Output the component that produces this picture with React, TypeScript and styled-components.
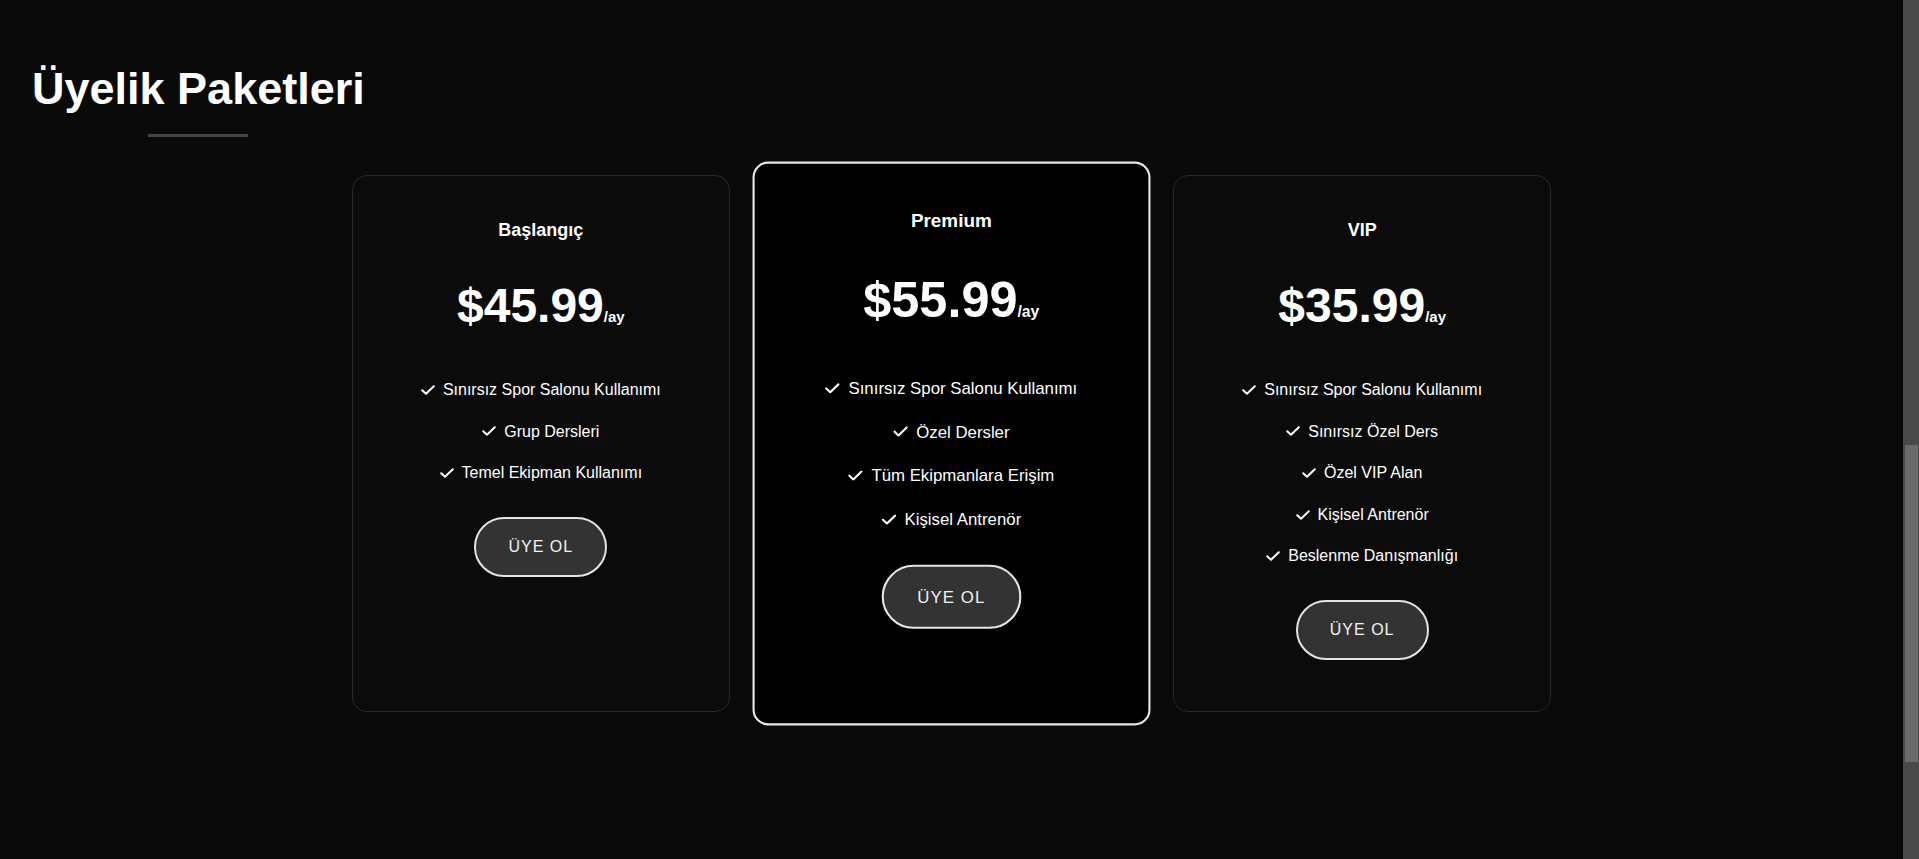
import React from 'react';
import styled, { createGlobalStyle } from 'styled-components';

const GlobalStyle = createGlobalStyle`
  html, body {
    margin: 0;
    padding: 0;
    background: #0a0a0a;
    color: #fff;
    font-family: "Liberation Sans", Arial, sans-serif;
  }
`;

const Viewport = styled.div`
  display: flex;
  height: 100vh;
  overflow: hidden;
`;

const PricingSection = styled.section`
  flex: 1;
  min-width: 0;
  padding: 63px 32px 0;
  background: #0a0a0a;
`;

// the window scrollbar, page is scrolled down to this section
const ScrollRail = styled.div`
  flex: 0 0 16px;
  background: #494949;
`;

const ScrollThumb = styled.div`
  height: 317px;
  margin: 445px 1px 0 2px;
  background: #6a6a6a;
`;

const TitleWrap = styled.div`
  display: flex;
`;

const SectionTitle = styled.h2`
  position: relative;
  margin: 0;
  font-size: 45px;
  font-weight: 700;
  color: #fff;

  &::after {
    content: '';
    position: absolute;
    left: 50%;
    bottom: -22px;
    width: 100px;
    height: 3px;
    background: #444;
    transform: translateX(-50%);
  }
`;

const PlansGrid = styled.div`
  display: grid;
  grid-template-columns: repeat(3, 1fr);
  gap: 32px;
  max-width: 1200px;
  margin: 60px auto 0;
`;

const PlanCard = styled.div<{ $featured?: boolean }>`
  box-sizing: border-box;
  padding: 44px 32px 51px;
  text-align: center;
  border-radius: 15px;
  background: ${p => (p.$featured ? '#000' : '#0b0b0b')};
  border: ${p => (p.$featured ? '2px solid #e8e8e8' : '1px solid #2a2a2a')};
  transform: ${p => (p.$featured ? 'scale(1.05)' : 'none')};
`;

const PlanName = styled.h3`
  margin: 0 0 37px;
  font-size: 18px;
  font-weight: 700;
  color: #fff;
`;

const Price = styled.div`
  margin-bottom: 44px;
  font-size: 48px;
  font-weight: 700;
  color: #fff;
`;

const Period = styled.span`
  font-size: 15px;
`;

const Features = styled.ul`
  display: flex;
  flex-direction: column;
  gap: 16px;
  list-style: none;
  margin: 0 0 31px;
  padding: 0;
`;

const Feature = styled.li`
  display: flex;
  justify-content: center;
  align-items: center;
  gap: 8px;
  font-size: 16px;
  line-height: 1.6;
  color: #fff;
`;

const JoinButton = styled.button`
  padding: 19.2px 32px;
  font-family: inherit;
  font-size: 16px;
  letter-spacing: 1px;
  color: #f2f2f2;
  background: #333;
  border: 2px solid #e5e5e5;
  border-radius: 40px;
  cursor: pointer;
`;

const CheckIcon: React.FC = () => (
  <svg width="14" height="10" viewBox="0 0 14 10" fill="none">
    <polyline
      points="1.2 5.2 5 8.8 12.8 1.2"
      stroke="#fff"
      strokeWidth="2"
      strokeLinecap="round"
      strokeLinejoin="round"
    />
  </svg>
);

type Plan = {
  name: string;
  price: string;
  features: string[];
  featured?: boolean;
};

const plans: Plan[] = [
  {
    name: 'Başlangıç',
    price: '$45.99',
    features: ['Sınırsız Spor Salonu Kullanımı', 'Grup Dersleri', 'Temel Ekipman Kullanımı'],
  },
  {
    name: 'Premium',
    price: '$55.99',
    features: ['Sınırsız Spor Salonu Kullanımı', 'Özel Dersler', 'Tüm Ekipmanlara Erişim', 'Kişisel Antrenör'],
    featured: true,
  },
  {
    name: 'VIP',
    price: '$35.99',
    features: [
      'Sınırsız Spor Salonu Kullanımı',
      'Sınırsız Özel Ders',
      'Özel VIP Alan',
      'Kişisel Antrenör',
      'Beslenme Danışmanlığı',
    ],
  },
];

const App: React.FC = () => {
  return (
    <>
      <GlobalStyle />
      <Viewport>
        <PricingSection>
          <TitleWrap>
            <SectionTitle>Üyelik Paketleri</SectionTitle>
          </TitleWrap>
          <PlansGrid>
            {plans.map(plan => (
              <PlanCard key={plan.name} $featured={plan.featured}>
                <PlanName>{plan.name}</PlanName>
                <Price>
                  {plan.price}
                  <Period>/ay</Period>
                </Price>
                <Features>
                  {plan.features.map(f => (
                    <Feature key={f}>
                      <CheckIcon />
                      {f}
                    </Feature>
                  ))}
                </Features>
                <JoinButton>ÜYE OL</JoinButton>
              </PlanCard>
            ))}
          </PlansGrid>
        </PricingSection>
        <ScrollRail>
          <ScrollThumb />
        </ScrollRail>
      </Viewport>
    </>
  );
};

export default App;
